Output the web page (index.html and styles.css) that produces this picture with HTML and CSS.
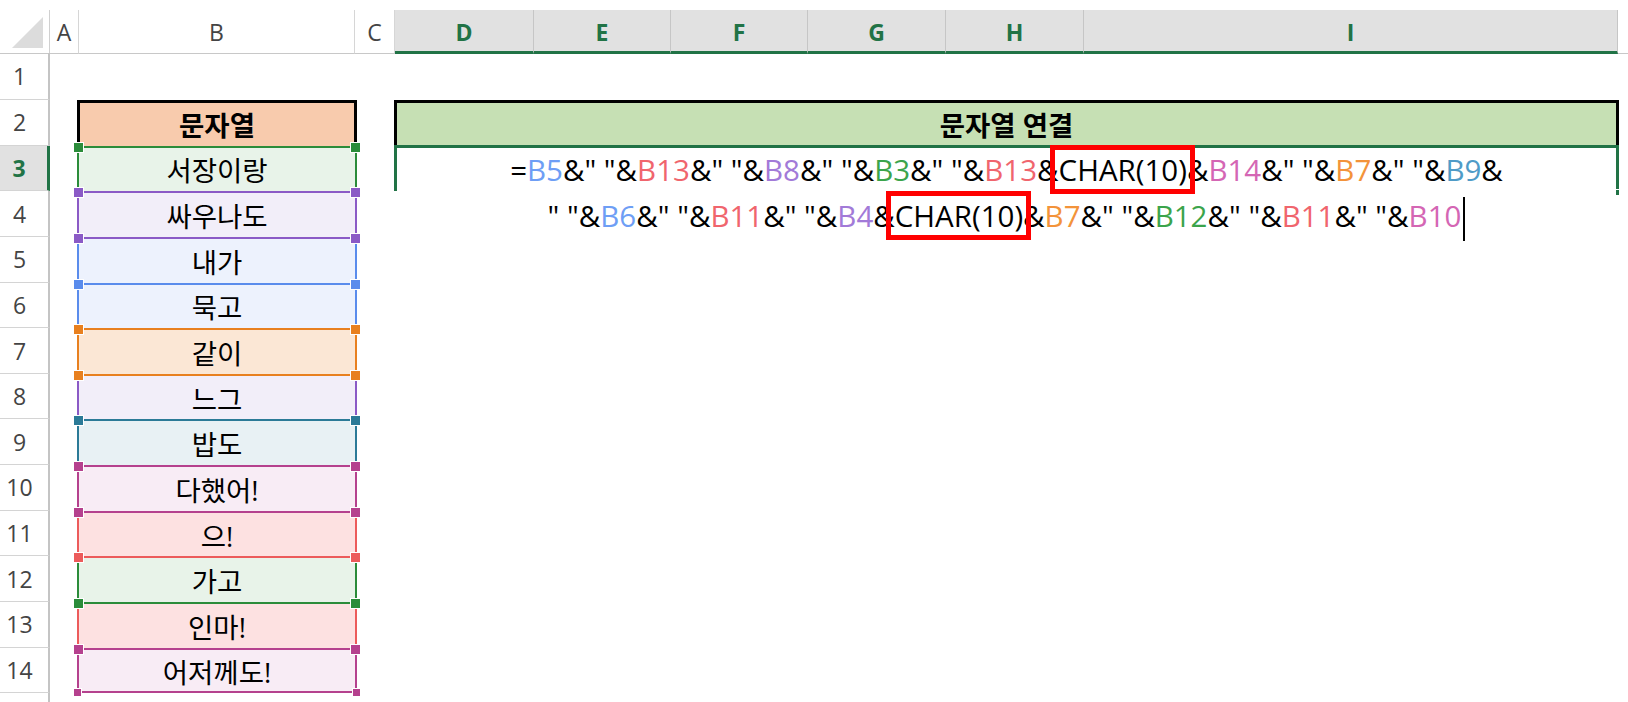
FILE: index.html
```html
<!DOCTYPE html>
<html lang="ko">
<head>
<meta charset="utf-8">
<title>문자열 연결</title>
<link rel="stylesheet" href="styles.css">
</head>
<body>
<div class="sheet">
  <div class="colheads">
    <div class="corner"><svg width="50" height="43" viewBox="0 0 50 43"><polygon points="43,7 43,38 12,38" fill="#dcdcdc"/></svg></div>
    <div class="ch">A</div>
    <div class="ch">B</div>
    <div class="ch">C</div>
    <div class="ch sel">D</div>
    <div class="ch sel">E</div>
    <div class="ch sel">F</div>
    <div class="ch sel">G</div>
    <div class="ch sel">H</div>
    <div class="ch sel">I</div>
    <div class="ch rest"></div>
  </div>
  <div class="body">
    <div class="rowheads">
      <div class="rh r1">1</div>
      <div class="rh">2</div>
      <div class="rh cur">3</div>
      <div class="rh">4</div>
      <div class="rh">5</div>
      <div class="rh">6</div>
      <div class="rh">7</div>
      <div class="rh">8</div>
      <div class="rh">9</div>
      <div class="rh">10</div>
      <div class="rh">11</div>
      <div class="rh">12</div>
      <div class="rh">13</div>
      <div class="rh">14</div>
      <div class="rh tail"></div>
    </div>
    <div class="cells">
      <div class="bspace"></div>
      <div class="b bh">문자열</div>
      <div class="b k-green">서장이랑</div>
      <div class="b k-purple">싸우나도</div>
      <div class="b k-blue t-purple">내가</div>
      <div class="b k-blue">묵고</div>
      <div class="b k-orange">같이</div>
      <div class="b k-purple t-orange">느그</div>
      <div class="b k-teal">밥도</div>
      <div class="b k-magenta">다했어!</div>
      <div class="b k-red t-magenta">으!</div>
      <div class="b k-green t-red">가고</div>
      <div class="b k-red t-green">인마!</div>
      <div class="b k-magenta last">어저께도!<i class="hb hl"></i><i class="hb hr"></i></div>

      <div class="hd">문자열 연결</div>
      <div class="fx">
        <div class="ln">=<span class="fb">B5</span>&amp;" "&amp;<span class="fr">B13</span>&amp;" "&amp;<span class="fp">B8</span>&amp;" "&amp;<span class="fg">B3</span>&amp;" "&amp;<span class="fr">B13</span>&amp;<span class="box">CHAR(10)</span>&amp;<span class="fm">B14</span>&amp;" "&amp;<span class="fo">B7</span>&amp;" "&amp;<span class="ft">B9</span>&amp;</div>
        <div class="ln">" "&amp;<span class="fb">B6</span>&amp;" "&amp;<span class="fr">B11</span>&amp;" "&amp;<span class="fp">B4</span>&amp;<span class="box">CHAR(10)</span>&amp;<span class="fo">B7</span>&amp;" "&amp;<span class="fg">B12</span>&amp;" "&amp;<span class="fr">B11</span>&amp;" "&amp;<span class="fm">B10</span><span class="caret"></span></div>
        <i class="fill-handle"></i>
      </div>
    </div>
  </div>
</div>
</body>
</html>
```
FILE: styles.css
```css
* { box-sizing: border-box; margin: 0; padding: 0; }
html, body { width: 1628px; height: 702px; overflow: hidden; background: #fff; }
body { font-family: "Open Sans", "Noto Sans CJK KR", sans-serif; color: #000; }

.sheet { padding-top: 10px; height: 702px; overflow: hidden; }

.colheads {
  display: grid;
  grid-template-columns: 50px 29px 276px 40px 139px 137px 137px 138px 138px 534px 1fr;
  height: 43px;
}
.corner { border-right: 1px solid #d0d0d0; border-bottom: 1px solid #c8c8c8; }
.corner svg { display: block; }
.ch {
  display: flex; align-items: center; justify-content: center;
  font-size: 23px; color: #444;
  border-right: 1px solid #d6d6d6;
  border-bottom: 1px solid #c8c8c8;
}
.ch.sel {
  background: #e1e1e1; color: #217346; font-weight: 700;
  border-right-color: #c6c6c6;
  border-bottom: 3px solid #217346;
  padding-top: 2px;
}
.ch.rest { border-right: 0; }

.body { display: flex; height: 649px; }

.rowheads { width: 50px; display: flex; flex-direction: column; }
.rh {
  flex: none;
  height: 45.65px;
  display: flex; align-items: center; justify-content: center;
  padding-right: 9px;
  font-size: 23px; color: #444;
  border-right: 2px solid #c4c4c4;
  border-bottom: 1px solid #d4d4d4;
}
.rh.r1 { height: 47px; }
.rh.tail { flex: 1; height: auto; border-bottom: 0; }
.rh.cur {
  background: #e1e1e1; color: #217346; font-weight: 700;
  border-right: 3px solid #217346;
}

.cells {
  flex: 1;
  display: grid;
  grid-template-columns: 29px 276px 40px 1223px 1fr;
  grid-template-rows: 47px repeat(14, 45.65px) 1fr;
}

.bspace { grid-column: 2; }

.b {
  grid-column: 2;
  margin: 0 -2px;
  position: relative;
  display: flex; align-items: center; justify-content: center;
  font-size: 27.5px;
  border-style: solid;
  border-width: 2px 2px 0;
  border-color: var(--c);
  border-top-color: var(--tc, var(--c));
  background: var(--bg);
}
.b::before, .b::after, .hb {
  content: "";
  position: absolute;
  top: -6px;
  width: 9px; height: 9px;
  background: var(--tc, var(--c));
  border: 1px solid #fff;
}
.b::before { left: -6px; }
.b::after { right: -6px; }
.b.last { border-bottom-width: 2px; }
.hb { top: auto; bottom: -6px; background: var(--c); }
.hb.hl { left: -6px; }
.hb.hr { right: -6px; }

.bh {
  border: 3px solid #000;
  border-bottom: 0;
  background: #f8cbad;
  font-weight: 700;
}
.bh::before, .bh::after { display: none; }

.k-green { --c: #2b8c3a; --bg: #e8f3e9; }
.k-purple { --c: #8b5ac6; --bg: #f2eef9; }
.k-blue { --c: #5a8cec; --bg: #edf2fd; }
.k-orange { --c: #e8801f; --bg: #fbe7d5; }
.k-teal { --c: #2b7a97; --bg: #e8f1f4; }
.k-magenta { --c: #b5418e; --bg: #f8ecf5; }
.k-red { --c: #ec5b5b; --bg: #fde1e1; }
.t-purple { --tc: #8b5ac6; }
.t-orange { --tc: #e8801f; }
.t-magenta { --tc: #b5418e; }
.t-red { --tc: #ec5b5b; }
.t-green { --tc: #2b8c3a; }

.hd {
  grid-column: 4; grid-row: 2;
  margin: 0 -1px;
  display: flex; align-items: center; justify-content: center;
  border: 3px solid #000;
  border-bottom: 0;
  background: #c6e0b4;
  font-size: 27.5px; font-weight: 700;
}

.fx {
  grid-column: 4; grid-row: 3;
  margin: -1px -1px 0;
  position: relative;
  border: 3px solid #217346;
  border-bottom: 0;
  text-align: center;
  font-size: 29.5px;
  line-height: 46px;
  white-space: nowrap;
}
.ln { height: 46px; }
.ln:first-child { margin-top: -1px; }

.fb { color: #6e9ef5; }
.fr { color: #f0656d; }
.fp { color: #a27ad8; }
.fg { color: #3ba44b; }
.fm { color: #d466b4; }
.fo { color: #f3933a; }
.ft { color: #4f9bc7; }

.box { position: relative; }
.box::after {
  content: "";
  position: absolute;
  left: -9px; right: -8px;
  top: -4px; bottom: -4px;
  border: 5px solid #ff0000;
}

.caret {
  display: inline-block;
  width: 2px; height: 44px;
  background: #000;
  vertical-align: middle;
  margin-left: 2px;
}

.fill-handle {
  position: absolute;
  right: -4px; bottom: -5px;
  width: 5px; height: 7px;
  background: #217346;
  border: 1px solid #fff;
}
```
